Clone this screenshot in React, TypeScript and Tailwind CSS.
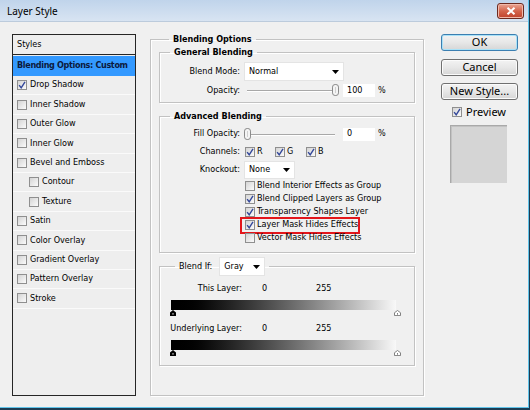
import type { ReactNode } from 'react'

const styleRows = [
  { name: 'Drop Shadow', on: true },
  { name: 'Inner Shadow' },
  { name: 'Outer Glow' },
  { name: 'Inner Glow' },
  { name: 'Bevel and Emboss' },
  { name: 'Contour', sub: true },
  { name: 'Texture', sub: true },
  { name: 'Satin' },
  { name: 'Color Overlay' },
  { name: 'Gradient Overlay' },
  { name: 'Pattern Overlay' },
  { name: 'Stroke' },
]

const advancedChecks = [
  { label: 'Blend Interior Effects as Group', on: false },
  { label: 'Blend Clipped Layers as Group', on: true },
  { label: 'Transparency Shapes Layer', on: true },
  { label: 'Layer Mask Hides Effects', on: true, marked: true },
  { label: 'Vector Mask Hides Effects', on: false },
]

function Check({ on }: { on?: boolean }) {
  return (
    <span className="flex h-[10px] w-[10px] shrink-0 items-center justify-center border border-[#8f8f8f] bg-linear-to-br from-[#d4d4d4] to-[#fbfbfb]">
      {on && (
        <svg viewBox="0 0 8 8" className="h-[8px] w-[8px]">
          <path d="M1.1 4.1 L3.2 6.8 L7 0.8" fill="none" stroke="#34489a" strokeWidth="1.4" />
        </svg>
      )}
    </span>
  )
}

function Select({ value, className }: { value: string; className: string }) {
  return (
    <div className={`flex items-center justify-between border border-[#e4e4e4] bg-white pl-[4px] pr-[4px] ${className}`}>
      <span>{value}</span>
      <svg viewBox="0 0 7 4" className="h-[4px] w-[7px]">
        <path d="M0 0 H7 L3.5 4 Z" fill="#000" />
      </svg>
    </div>
  )
}

function Slider({ max }: { max?: boolean }) {
  return (
    <div className="relative h-[13px] w-[96px]">
      <div className="absolute left-[3px] right-[5px] top-[6px] h-[2px] border-t border-b border-t-[#a8a8a8] border-b-white" />
      <svg viewBox="0 0 7 12" className={`absolute top-0 h-[12px] w-[7px] ${max ? 'left-[88px]' : 'left-0'}`}>
        <rect x="0.5" y="0.5" width="6" height="11" rx="2.6" fill="#f4f4f4" stroke="#8a8a8a" />
        <line x1="3.5" y1="3" x2="3.5" y2="9" stroke="#d0d0d0" />
      </svg>
    </div>
  )
}

function NumBox({ value }: { value: string }) {
  return <div className="flex h-[13px] w-[32px] items-center bg-white pl-[4px]">{value}</div>
}

function Group({ legend, children, className }: { legend: ReactNode; children: ReactNode; className: string }) {
  return (
    <fieldset className={`border border-[#c2c2c2] shadow-[inset_1px_1px_0_#fff,1px_1px_0_#fff] ${className}`}>
      <legend className="ml-[10px] px-[4px] font-bold leading-[12px] text-black">{legend}</legend>
      {children}
    </fieldset>
  )
}

function BlackThumb() {
  return (
    <svg viewBox="0 0 7 7" className="h-[6px] w-[6px]">
      <path d="M0 7 V3 L3.5 0 L7 3 V7 Z" fill="#000" />
      <rect x="3" y="3.5" width="1" height="2" fill="#fff" />
    </svg>
  )
}

function WhiteThumb() {
  return (
    <svg viewBox="0 0 8 7" className="h-[6px] w-[7px]">
      <path d="M0.5 6.5 V3.2 L4 0.6 L7.5 3.2 V6.5 Z" fill="#fff" stroke="#6e6e6e" />
      <rect x="3.5" y="3.5" width="1" height="2" fill="#6e6e6e" />
    </svg>
  )
}

function Button({ label, focused }: { label: string; focused?: boolean }) {
  return (
    <div
      className={`flex h-[17px] w-[77px] items-center justify-center rounded-[3px] border bg-linear-to-b from-[#f3f3f3] via-[#e7e7e7] to-[#d6d6d6] text-[11px] ${
        focused ? 'border-[#3c7fb1] shadow-[inset_0_0_0_1px_#a9e2f8]' : 'border-[#707070] shadow-[inset_0_0_0_1px_#fbfbfb]'
      }`}
    >
      {label}
    </div>
  )
}

export default function App() {
  return (
    <div className="h-[410px] w-[530px] bg-[#1d3c52] font-['DejaVu_Sans_Condensed','DejaVu_Sans',sans-serif] text-[9px] text-black">
      <div className="flex h-[408px] w-[529px] flex-col border-r border-b border-[#61c4ea] bg-[#f0f0f0]">
        {/* title bar */}
        <div className="flex h-[22px] shrink-0 items-center justify-between border-b border-[#bccbdc] bg-linear-to-b from-[#c0d4eb] to-[#d8e4f2] pl-[7px] pr-[4px]">
          <span className="font-['Noto_Sans',sans-serif] text-[10px] leading-none">Layer Style</span>
          <div className="flex h-[16px] w-[27px] items-center justify-center rounded-[3px] border border-[#6d2a1f] bg-linear-to-b from-[#e9a594] via-[#d4654c] to-[#c0412a] shadow-[inset_0_0_0_1px_#f1b9aa]">
            <svg viewBox="0 0 10 8" className="h-[8px] w-[10px]">
              <path d="M1.5 0.8 L8.5 7.2 M8.5 0.8 L1.5 7.2" stroke="#fff" strokeWidth="2" />
            </svg>
          </div>
        </div>

        <div className="flex items-start pl-[12px] pt-[11px]">
          {/* styles list */}
          <div className="mt-[1px] flex h-[362px] w-[124px] shrink-0 flex-col border border-[#262626] bg-[#eeeeee]">
            <div className="flex h-[20px] shrink-0 items-center border-b border-[#262626] pl-[4px]">Styles</div>
            <div className="mt-[1px] flex h-[20px] shrink-0 items-center whitespace-nowrap bg-[#3399ff] pl-[4px] font-bold tracking-[-0.35px] text-[#0c1a3c]">
              Blending Options: Custom
            </div>
            {styleRows.map((row) => (
              <div
                key={row.name}
                className={`flex h-[19.4px] shrink-0 items-center gap-[3px] border-b border-[#fafafa] ${row.sub ? 'pl-[16px]' : 'pl-[4px]'}`}
              >
                <Check on={row.on} />
                <span>{row.name}</span>
              </div>
            ))}
          </div>

          {/* main blending options */}
          <fieldset className="ml-[14px] h-[363px] w-[274px] shrink-0 border border-[#c2c2c2] px-[8px] shadow-[inset_1px_1px_0_#fff,1px_1px_0_#fff]">
            <legend className="ml-[10px] px-[4px] font-bold leading-[12px]">Blending Options</legend>

            <Group legend="General Blending" className="mt-[1px] pb-[3px]">
              <div className="mt-[4px] flex h-[19px] items-center">
                <span className="w-[80px] text-right">Blend Mode:</span>
                <Select value="Normal" className="ml-[4px] h-[19px] w-[100px]" />
              </div>
              <div className="mt-[1px] flex h-[17px] items-center">
                <span className="w-[80px] text-right">Opacity:</span>
                <div className="ml-[4px]">
                  <Slider max />
                </div>
                <div className="ml-[3px]">
                  <NumBox value="100" />
                </div>
                <span className="ml-[3px]">%</span>
              </div>
            </Group>

            <Group legend="Advanced Blending" className="mt-[7px] pb-[8px]">
              <div className="mt-[5px] flex h-[14px] items-center">
                <span className="w-[80px] text-right">Fill Opacity:</span>
                <div className="ml-[4px]">
                  <Slider />
                </div>
                <div className="ml-[3px]">
                  <NumBox value="0" />
                </div>
                <span className="ml-[3px]">%</span>
              </div>
              <div className="mt-[4px] flex h-[14px] items-center">
                <span className="w-[80px] text-right">Channels:</span>
                <div className="ml-[5px] flex items-center gap-[2px]">
                  <Check on />
                  <span className="w-[16px]">R</span>
                  <Check on />
                  <span className="w-[17px]">G</span>
                  <Check on />
                  <span>B</span>
                </div>
              </div>
              <div className="mt-[2px] flex h-[18px] items-center">
                <span className="w-[80px] text-right">Knockout:</span>
                <Select value="None" className="ml-[4px] h-[18px] w-[51px]" />
              </div>
              <div className="flex flex-col pl-[85px]">
                {advancedChecks.map((c) => (
                  <div key={c.label} className="relative flex h-[13px] items-center gap-[2px]">
                    <Check on={c.on} />
                    <span>{c.label}</span>
                    {c.marked && (
                      <span className="absolute -left-[5px] -top-[1px] h-[17px] w-[120px] border-2 border-[#e3161b]" />
                    )}
                  </div>
                ))}
              </div>
            </Group>

            <fieldset className="mt-[4px] border border-[#c2c2c2] pb-[9px] shadow-[inset_1px_1px_0_#fff,1px_1px_0_#fff]">
              <legend className="ml-[15px] flex items-center gap-[7px] px-[4px]">
                <span>Blend If:</span>
                <Select value="Gray" className="h-[19px] w-[46px]" />
              </legend>
              <div className="mt-[6px] flex h-[14px] items-center">
                <span className="w-[82px] text-right">This Layer:</span>
                <span className="ml-[20px] w-[54px]">0</span>
                <span>255</span>
              </div>
              <div className="ml-[11px] mt-[4px] h-[10px] w-[225px] bg-linear-to-r from-black to-[#f8f8f8]" />
              <div className="ml-[10px] flex w-[231px] justify-between">
                <BlackThumb />
                <WhiteThumb />
              </div>
              <div className="mt-[6px] flex h-[14px] items-center">
                <span className="w-[82px] text-right">Underlying Layer:</span>
                <span className="ml-[20px] w-[54px]">0</span>
                <span>255</span>
              </div>
              <div className="ml-[11px] mt-[4px] h-[10px] w-[225px] bg-linear-to-r from-black to-[#f8f8f8]" />
              <div className="ml-[10px] flex w-[231px] justify-between">
                <BlackThumb />
                <WhiteThumb />
              </div>
            </fieldset>
          </fieldset>

          {/* buttons */}
          <div className="ml-[17px] mt-[1px] flex w-[77px] shrink-0 flex-col font-['Noto_Sans',sans-serif]">
            <Button label="OK" focused />
            <div className="mt-[8px]">
              <Button label="Cancel" />
            </div>
            <div className="mt-[7px]">
              <Button label="New Style..." />
            </div>
            <div className="mt-[6px] flex h-[12px] items-center gap-[4px] pl-[11px] text-[11px]">
              <Check on />
              <span>Preview</span>
            </div>
            <div className="ml-[9px] mt-[7px] h-[58px] w-[57px] border-l border-t border-[#a9a9a9] bg-[#d5d5d5] shadow-[inset_1px_1px_0_#c2c2c2]" />
          </div>
        </div>
      </div>
    </div>
  )
}
